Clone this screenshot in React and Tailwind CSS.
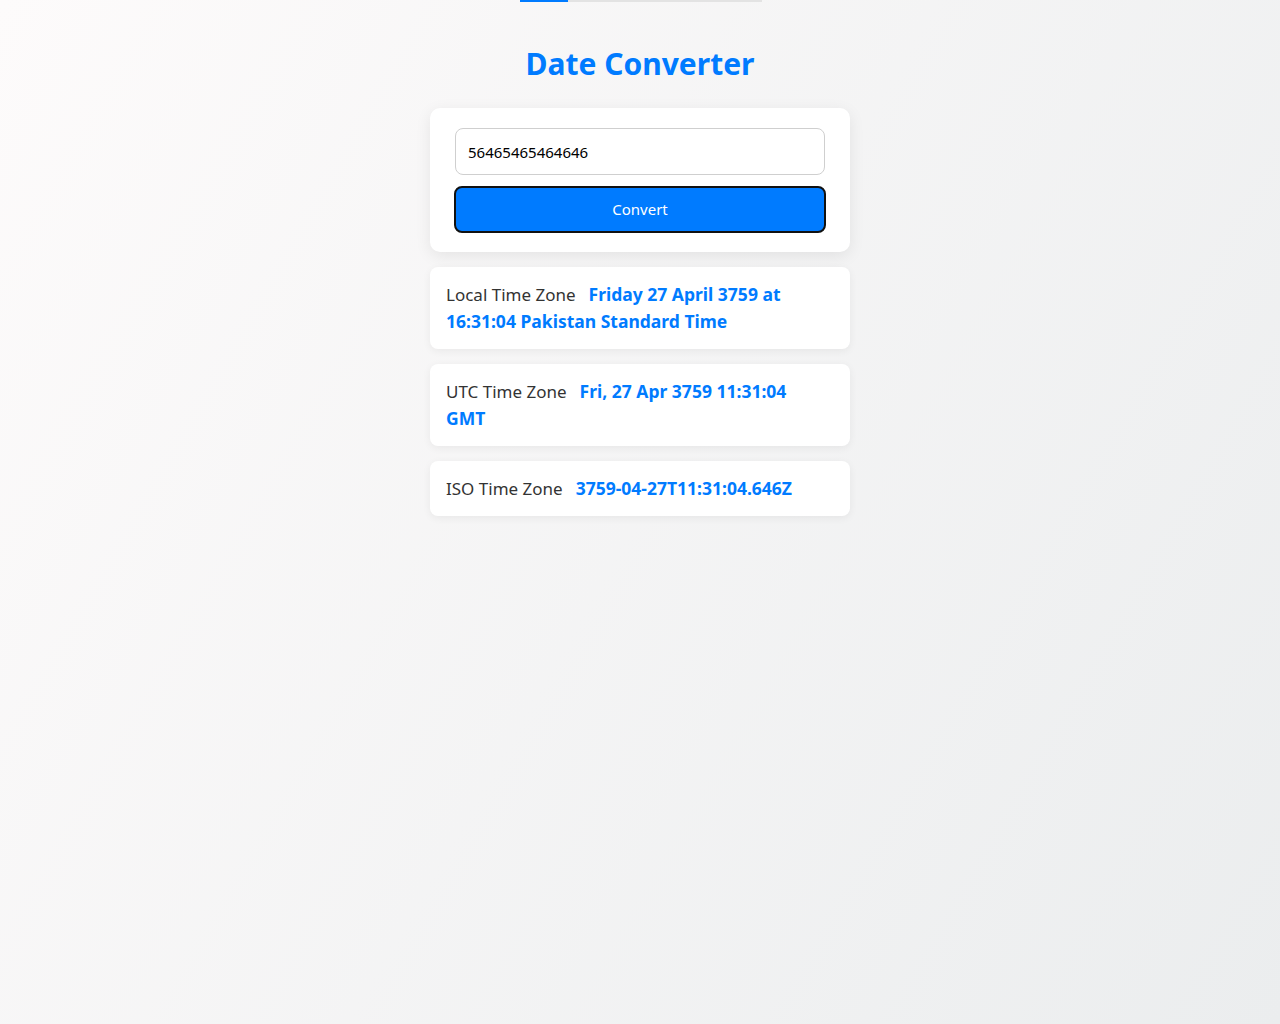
export default function App() {
  const results = [
    { label: "Local Time Zone", value: "Friday 27 April 3759 at 16:31:04 Pakistan Standard Time" },
    { label: "UTC Time Zone", value: "Fri, 27 Apr 3759 11:31:04 GMT" },
    { label: "ISO Time Zone", value: "3759-04-27T11:31:04.646Z" },
  ];
  return (
    <div
      className="min-h-[1024px] w-full bg-[linear-gradient(120deg,#fdfbfb_0%,#ebedee_100%)] flex flex-col items-center"
      style={{ fontFamily: '"Noto Sans", "Open Sans", sans-serif' }}
    >
      <div className="flex w-[242px] h-[2px] ml-[2px]">
        <div className="w-[48px] h-full bg-[#007bff]" />
        <div className="flex-1 h-full bg-[#e3e3e3]" />
      </div>
      <h1 className="mt-[43px] text-[30px] leading-[38px] font-bold text-[#007bff]">Date Converter</h1>
      <div className="mt-[25px] w-[420px] bg-white rounded-[10px] shadow-[0_4px_16px_rgba(0,0,0,0.08)] px-[25px] pt-[20px] pb-[19px] flex flex-col gap-[11px]">
        <input
          readOnly
          value="56465465464646"
          className="w-full h-[47px] rounded-[8px] border border-[#cfcfcf] px-[12px] text-[15px] text-black outline-none bg-white"
        />
        <button className="-mx-px h-[47px] rounded-[8px] bg-[#007bff] border-2 border-[#111] text-white text-[15px]">
          Convert
        </button>
      </div>
      <div className="mt-[15px] flex flex-col gap-[15px]">
        {results.map((r) => (
          <div
            key={r.label}
            className="w-[420px] bg-white rounded-[8px] shadow-[0_2px_8px_rgba(0,0,0,0.06)] pl-[16px] pr-[24px] py-[14px] text-[17px] leading-[27px]"
          >
            <span className="text-[#333]">{r.label}</span>
            <span className="ml-[13px] font-bold text-[17.5px] text-[#007bff]">{r.value}</span>
          </div>
        ))}
      </div>
    </div>
  );
}
